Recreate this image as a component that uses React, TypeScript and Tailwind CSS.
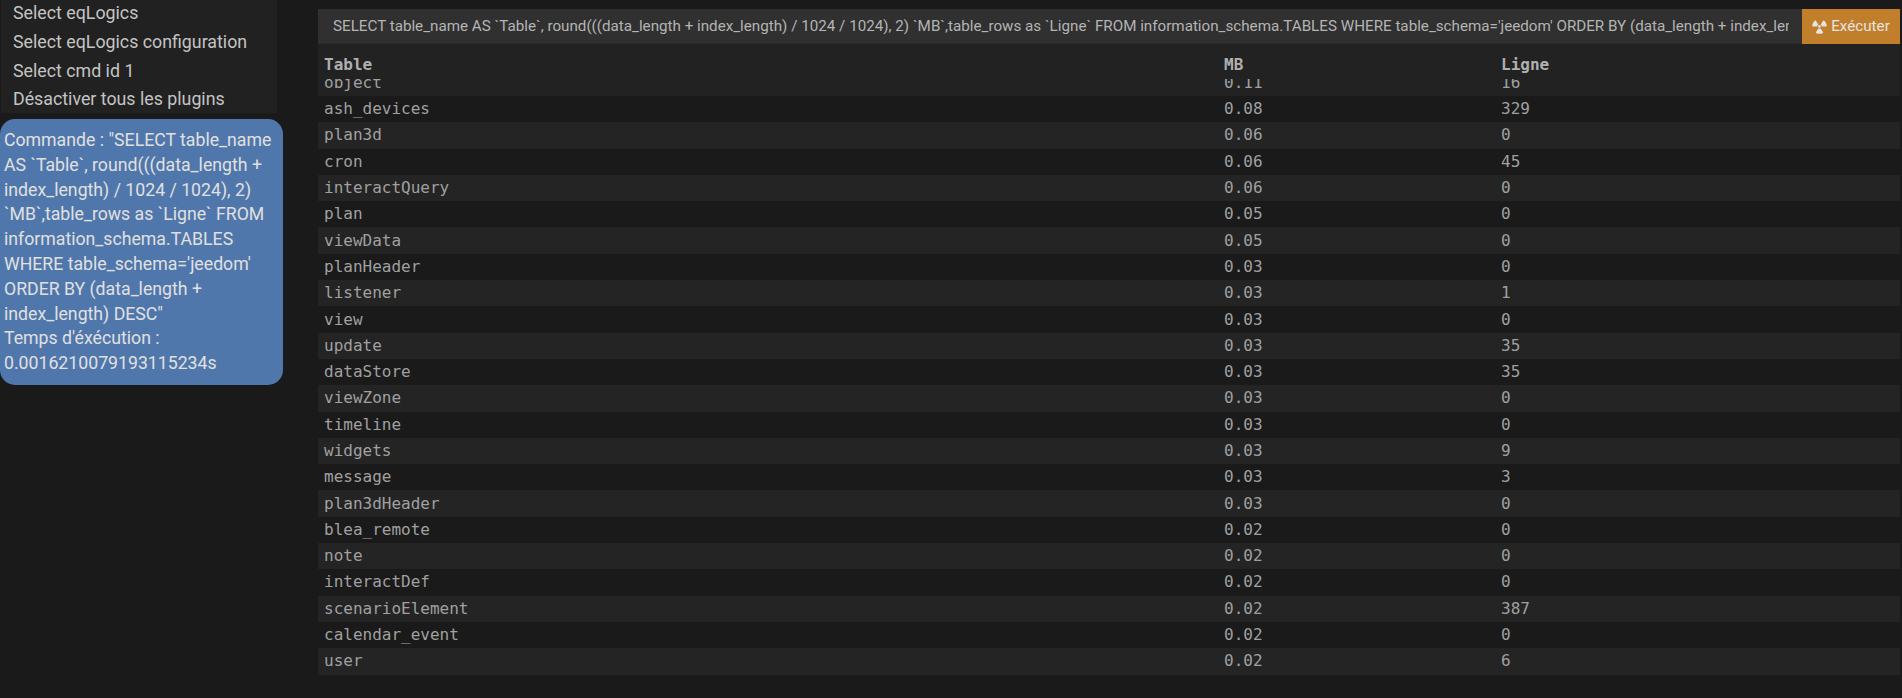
import { FaRadiation } from "react-icons/fa";

const ROWS: [string, string, string][] = [
  ["ash_devices", "0.08", "329"],
  ["plan3d", "0.06", "0"],
  ["cron", "0.06", "45"],
  ["interactQuery", "0.06", "0"],
  ["plan", "0.05", "0"],
  ["viewData", "0.05", "0"],
  ["planHeader", "0.03", "0"],
  ["listener", "0.03", "1"],
  ["view", "0.03", "0"],
  ["update", "0.03", "35"],
  ["dataStore", "0.03", "35"],
  ["viewZone", "0.03", "0"],
  ["timeline", "0.03", "0"],
  ["widgets", "0.03", "9"],
  ["message", "0.03", "3"],
  ["plan3dHeader", "0.03", "0"],
  ["blea_remote", "0.02", "0"],
  ["note", "0.02", "0"],
  ["interactDef", "0.02", "0"],
  ["scenarioElement", "0.02", "387"],
  ["calendar_event", "0.02", "0"],
  ["user", "0.02", "6"],
];

const QUERY =
  "SELECT table_name AS `Table`, round(((data_length + index_length) / 1024 / 1024), 2) `MB`,table_rows as `Ligne` FROM information_schema.TABLES WHERE table_schema='jeedom' ORDER BY (data_length + index_length) DESC";

const MENU = ["Select eqLogics", "Select eqLogics configuration", "Select cmd id 1", "Désactiver tous les plugins"];

function Cells({ row }: { row: [string, string, string] }) {
  return (
    <>
      <div className="w-[900px] pl-1.5">{row[0]}</div>
      <div className="w-[277px] pl-1.5">{row[1]}</div>
      <div className="pl-1.5">{row[2]}</div>
    </>
  );
}

export default function App() {
  return (
    <div className="flex h-[698px] w-[1902px] overflow-hidden bg-[#1a1a1a] font-['Roboto',sans-serif] text-[#c8c8c8]">
      {/* Left column */}
      <div className="w-[318px] shrink-0">
        <div className="ml-px h-[113px] w-[276px] overflow-hidden bg-[#212121] pl-3 text-[17.8px] leading-[28.8px] text-[#c4c4c4]">
          <div className="-mt-px">
            {MENU.map((m) => (
              <div key={m}>{m}</div>
            ))}
          </div>
        </div>
        <div className="mt-1.5 h-[266px] w-[283px] rounded-[15px] bg-[#5077ab] px-1 py-[9px] text-[17.7px] leading-[24.8px] text-[#e0e0e0]">
          Commande : "SELECT table_name AS `Table`, round(((data_length + index_length) / 1024 / 1024), 2) `MB`,table_rows as `Ligne` FROM information_schema.TABLES WHERE table_schema='jeedom' ORDER BY (data_length + index_length) DESC"
          <br />
          Temps d'éxécution : 0.0016210079193115234s
        </div>
      </div>

      {/* Right column */}
      <div className="w-[1582px] pt-[9px]">
        <div className="flex h-[35px]">
          <div className="min-w-0 flex-1 border-b border-[#2a2a2a] bg-[#303030] pl-[15px] pr-[13px] text-[15.2px] leading-[35px] text-[#b4b4b4]">
            <div className="overflow-hidden whitespace-nowrap">{QUERY}</div>
          </div>
          <div className="flex w-[98px] shrink-0 items-center justify-center gap-1 bg-[#c17f2b] text-[15.2px] text-[#e4e4e4]">
            <FaRadiation className="h-[15px] w-[15px]" />
            Exécuter
          </div>
        </div>
        <div className="font-['DejaVu_Sans_Mono',monospace] text-[16px] text-[#a0a0a0]">
          <div className="flex h-[35px] items-center bg-[#222222] pt-1.5 font-bold text-[#b0b0b0]">
            <Cells row={["Table", "MB", "Ligne"]} />
          </div>
          <div className="flex h-[17px] items-end overflow-hidden bg-[#222222] leading-[26.3px]">
            <Cells row={["object", "0.11", "16"]} />
          </div>
          {ROWS.map((r, i) => (
            <div key={r[0]} className={`flex h-[26.3px] items-center ${i % 2 === 0 ? "bg-[#1a1a1a]" : "bg-[#242424]"}`}>
              <Cells row={r} />
            </div>
          ))}
        </div>
      </div>
    </div>
  );
}
